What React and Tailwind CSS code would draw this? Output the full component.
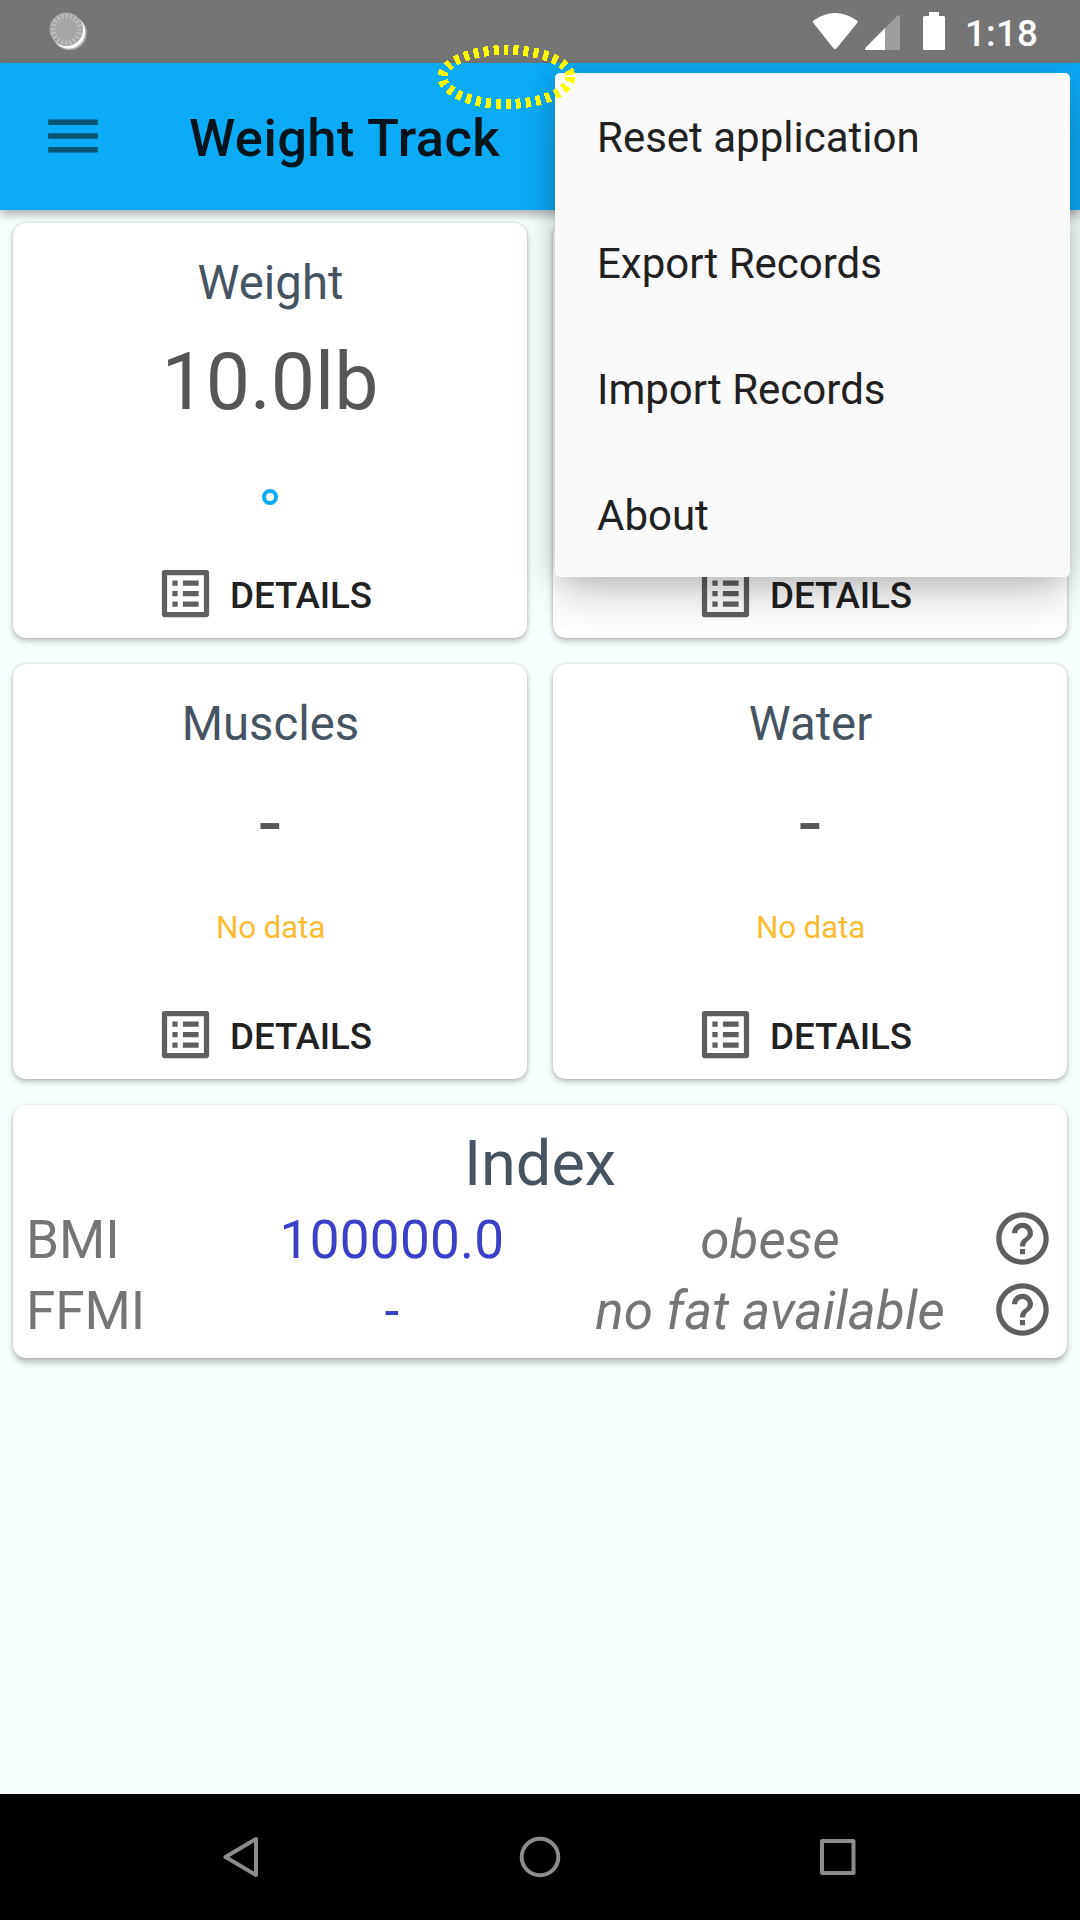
const LIST_ALT =
  "M19 5v14H5V5h14m1.1-2H3.9c-.5 0-.9.4-.9.9v16.2c0 .4.4.9.9.9h16.2c.4 0 .9-.5.9-.9V3.9c0-.5-.5-.9-.9-.9zM11 7h6v2h-6V7zm0 4h6v2h-6v-2zm0 4h6v2h-6zM7 7h2v2H7zm0 4h2v2H7zm0 4h2v2H7z";
const HELP =
  "M11 18h2v-2h-2v2zm1-16C6.48 2 2 6.48 2 12s4.48 10 10 10 10-4.48 10-10S17.52 2 12 2zm0 18c-4.41 0-8-3.59-8-8s3.59-8 8-8 8 3.59 8 8-3.59 8-8 8zm0-14c-2.21 0-4 1.79-4 4h2c0-1.1.9-2 2-2s2 .9 2 2c0 2-3 1.75-3 5h2c0-2.25 3-2.5 3-5 0-2.21-1.79-4-4-4z";

const ROWS = [
  { label: "BMI", value: "100000.0", note: "obese" },
  { label: "FFMI", value: "-", note: "no fat available" },
];
const MENU = ["Reset application", "Export Records", "Import Records", "About"];

function StatusBar() {
  return (
    <header className="flex h-[63px] items-start bg-[#757575] text-white">
      <svg className="ml-[48px] mt-[10px] h-[42px] w-[42px]" viewBox="0 0 42 42">
        <circle cx="21.5" cy="22.8" r="17.2" fill="#b5b5b5" />
        <circle cx="20.5" cy="21.8" r="16.6" fill="#ffffff" />
        <circle cx="18.3" cy="19.3" r="16.8" fill="#a6a6a6" />
        <circle cx="18.3" cy="19.3" r="13.3" fill="none" stroke="#c4c4c4" strokeWidth="5" strokeDasharray="1.4 2.778" strokeDashoffset="0.7" />
      </svg>
      <svg className="ml-auto h-[63px] w-[150px]" viewBox="0 0 150 63" fill="#ffffff">
        <path d="M13.500 20.500 Q35 5.500 57 20.500 Q58.200 21.500 57.300 22.700 L36.800 48 Q35 50 33.200 48 L13.200 22.700 Q12.300 21.500 13.500 20.500Z" />
        <path d="M98 15.300 Q100 14.300 100 17 V48.500 Q100 50 98.500 50 H66.500 Q64 50 65.600 47.700Z" fillOpacity="0.3" />
        <path d="M85 28 V50 H66.500 Q64 50 65.600 47.700Z" />
        <path d="M129 12H139V16H143.500Q145 16 145 17.500V48.500Q145 50 143.500 50H124.500Q123 50 123 48.500V17.500Q123 16 124.500 16H129Z" />
      </svg>
      <span className="ml-[15px] mr-[42px] mt-[13px] w-[73px] whitespace-nowrap text-[36.75px] font-medium leading-[41px] tracking-[0.2px]">1:18</span>
    </header>
  );
}

function Highlight() {
  return (
    <svg className="absolute left-[430px] top-[40px] z-30 h-[76px] w-[154px]" viewBox="430 40 154 76">
      <ellipse cx="506.500" cy="77" rx="64" ry="27" fill="none" stroke="#ffff00" strokeWidth="10" strokeDasharray="5 5" shapeRendering="crispEdges" />
    </svg>
  );
}

function MetricCard({ title, value, empty }) {
  return (
    <section className="flex h-[415px] flex-col items-center rounded-[13px] bg-white pt-8 shadow-[0_3px_6px_rgba(0,0,0,0.25),0_0_3px_rgba(0,0,0,0.15)]">
      <h2 className="h-[56px] pl-px text-[47.25px] leading-[56px] text-[#455460]">{title}</h2>
      <div className="mt-[25px] h-[92px] text-[78.75px] leading-[92px] text-[#565656]">{value}</div>
      <div className="flex h-[116px] items-center pt-[2px] text-[31.5px] text-[#fbbc34]">
        {empty ? <span className="pl-px tracking-[-0.2px]">No data</span> : value && <span className="mt-5 h-4 w-4 rounded-full border-4 border-[#0cabf5]" />}
      </div>
      <button className="mt-[9px] flex h-20 w-full items-center gap-[13px] pl-[141px]">
        <svg className="h-[63px] w-[63px]" viewBox="0 0 24 24" fill="#5f5f5f">
          <path d={LIST_ALT} />
        </svg>
        <span className="pt-[5px] text-[36.75px] font-medium leading-[44px] tracking-[-0.1px] text-[#212121]">DETAILS</span>
      </button>
    </section>
  );
}

function OverflowMenu() {
  return (
    <ul className="absolute left-[555px] top-[73px] z-20 h-[504px] w-[515px] rounded-[5px] bg-[#fafafa] shadow-[0_22px_44px_-4px_rgba(0,0,0,0.2),0_0_28px_rgba(0,0,0,0.14)] [clip-path:inset(-10px_-10px_-90px_-80px)]">
      {MENU.map((item) => (
        <li key={item} className="flex h-[126px] items-center px-[42px] pt-[2px] text-[42px] text-[#212121]">
          {item}
        </li>
      ))}
    </ul>
  );
}

export default function App() {
  return (
    <div className="relative flex h-[1920px] w-[1080px] flex-col overflow-hidden bg-[#f7ffff] font-['Roboto',sans-serif]">
      <StatusBar />
      <div className="flex h-[147px] items-center bg-[#0cabf5] shadow-[0_5px_9px_rgba(0,0,0,0.3)]">
        <svg className="mb-[2px] ml-[40px] h-[66px] w-[66px]" viewBox="0 0 24 24" fill="#085574">
          <path d="M3 18h18v-2H3v2zm0-5h18v-2H3v2zm0-7v2h18V6H3z" />
        </svg>
        <h1 className="ml-[83px] pt-[4px] text-[52.5px] font-medium tracking-[0.42px] text-[#02151f]">Weight Track</h1>
      </div>
      <main className="flex flex-1 flex-col gap-[26px] p-[13px]">
        <div className="grid grid-cols-2 gap-[26px]">
          <MetricCard title="Weight" value="10.0lb" />
          <MetricCard />
          <MetricCard title="Muscles" value="-" empty />
          <MetricCard title="Water" value="-" empty />
        </div>
        <section className="h-[253px] rounded-[13px] bg-white px-[13px] pt-[21px] shadow-[0_5px_6px_rgba(0,0,0,0.25),0_0_3px_rgba(0,0,0,0.15)]">
          <h2 className="-mb-[2px] text-center text-[63px] leading-[76px] text-[#455460]">Index</h2>
          {ROWS.map((row) => (
            <div key={row.label} className="grid h-[71px] grid-cols-[183px_368px_386px_63px] items-center text-[53px] leading-[71px] text-[#757575]">
              <span className="pt-[5px]">{row.label}</span>
              <span className="pr-[2px] pt-[5px] text-center tracking-[0.3px] text-[#3c40c6]">{row.value}</span>
              <span className="pt-[5px] text-center italic tracking-[0.1px]">{row.note}</span>
              <svg className="ml-[28px] h-[63px] w-[63px]" viewBox="0 0 24 24" fill="#5f5f5f">
                <path d={HELP} />
              </svg>
            </div>
          ))}
        </section>
      </main>
      <nav className="flex h-[126px] items-center bg-black">
        <svg className="h-[126px] w-full" viewBox="0 0 1080 126" fill="none" stroke="#8c8c8c" strokeWidth="4" strokeLinejoin="round">
          <path d="M225.500 63 L256 45 V81Z" />
          <circle cx="540" cy="63" r="18.300" />
          <rect x="822" y="47" width="31.500" height="32" />
        </svg>
      </nav>
      <OverflowMenu />
      <Highlight />
    </div>
  );
}
